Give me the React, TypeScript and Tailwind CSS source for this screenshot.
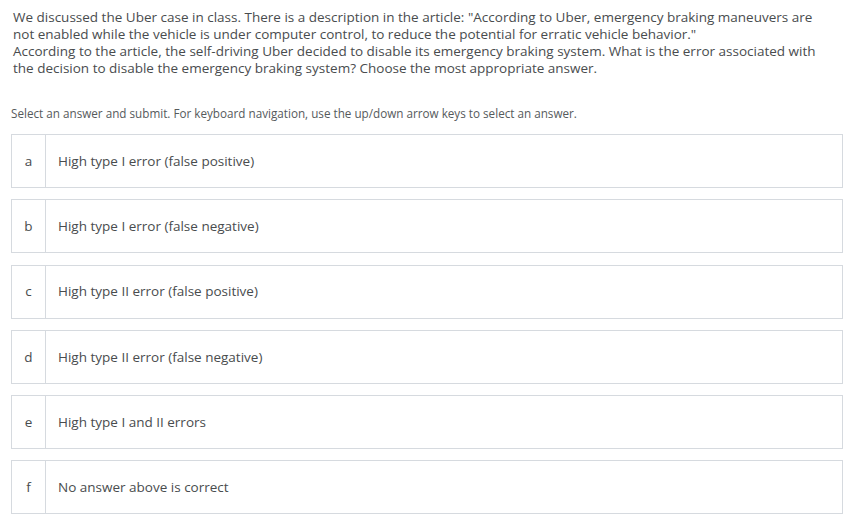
import React from "react";

const options = [
  ["a", "High type I error (false positive)"],
  ["b", "High type I error (false negative)"],
  ["c", "High type II error (false positive)"],
  ["d", "High type II error (false negative)"],
  ["e", "High type I and II errors"],
  ["f", "No answer above is correct"],
];

export default function App() {
  return (
    <div className="w-[854px] h-[514px] overflow-hidden bg-white px-[11px] pt-[9px] font-['Open_Sans','Noto_Sans',sans-serif]">
      <p className="ml-[2px] whitespace-nowrap text-[13.5px] leading-[17px] text-[#494c4e]">
        We discussed the Uber case in class. There is a description in the article: "According to Uber, emergency braking maneuvers are
        <br />
        not enabled while the vehicle is under computer control, to reduce the potential for erratic vehicle behavior."
        <br />
        According to the article, the self-driving Uber decided to disable its emergency braking system. What is the error associated with
        <br />
        the decision to disable the emergency braking system? Choose the most appropriate answer.
      </p>
      <p className="mt-[29px] text-[11.7px] leading-[14px] text-[#565a5c]">
        Select an answer and submit. For keyboard navigation, use the up/down arrow keys to select an answer.
      </p>
      <div className="mt-[14px] flex flex-col gap-[11.3px]">
        {options.map(([l, t]) => (
          <div key={l} className="flex h-[54px] border border-[#d6dadf] bg-white">
            <div className="flex w-[34px] items-center justify-center border-r border-[#d6dadf] text-[13.5px] text-[#494c4e]">
              {l}
            </div>
            <div className="flex items-center pl-[12px] text-[13.5px] text-[#494c4e]">{t}</div>
          </div>
        ))}
      </div>
    </div>
  );
}
